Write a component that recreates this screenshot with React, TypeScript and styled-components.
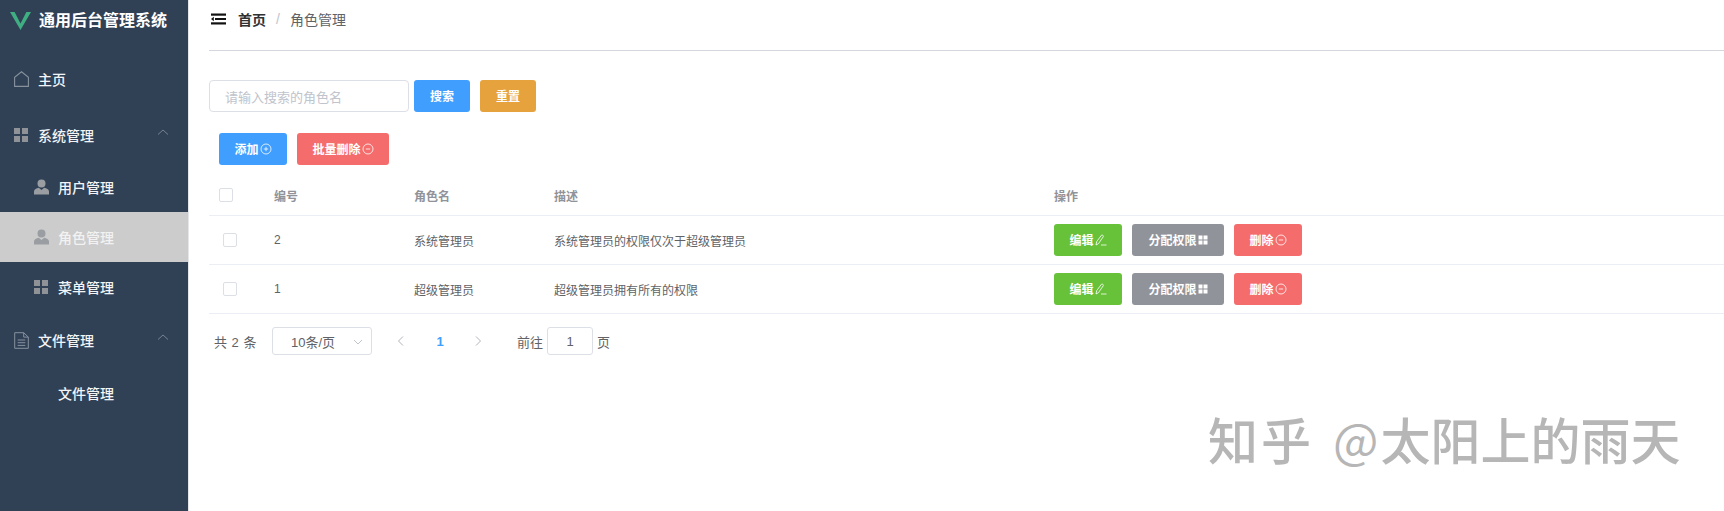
import React from "react";
import styled, { createGlobalStyle } from "styled-components";

const Global = createGlobalStyle`
  html, body { margin: 0; padding: 0; background: #fff; }
  body { font-family: "Liberation Sans", "Noto Sans CJK SC", sans-serif; }
  * { box-sizing: border-box; }
`;

const Page = styled.div`
  position: relative;
  display: flex;
  width: 1724px;
  height: 511px;
  overflow: hidden;
`;

const Side = styled.aside`
  width: 189px;
  flex: none;
  background: #304156;
  color: #fff;
  border-right: 1px solid #e4e6ea;
`;

const Logo = styled.div`
  display: flex;
  align-items: center;
  gap: 8px;
  height: 38px;
  padding-left: 10px;
  font-size: 16px;
  font-weight: 700;
  margin-bottom: 15px;
`;

const LogoMark = styled.svg`
  margin-top: 4px;
`;

const MenuRow = styled.div<{ $h: number; $sub?: boolean; $active?: boolean; $lift?: number }>`
  position: relative;
  display: flex;
  align-items: center;
  height: ${(p) => p.$h}px;
  padding-left: ${(p) => (p.$sub ? 34 : 14)}px;
  padding-bottom: ${(p) => p.$lift ?? 0}px;
  gap: 9px;
  font-size: 14px;
  font-weight: 500;
  color: ${(p) => (p.$active ? "#f2f2f2" : "#f2f4f6")};
  background: ${(p) => (p.$active ? "#cccccc" : "transparent")};
`;

const IconSlot = styled.span`
  display: inline-flex;
  width: 15px;
  height: 16px;
  flex: none;
  align-items: center;
  justify-content: flex-start;
`;

const BlankSlot = styled(IconSlot)`
  visibility: hidden;
`;

const Chevron = styled.svg`
  position: absolute;
  right: 19px;
  top: 50%;
  margin-top: -9px;
`;

const Main = styled.main`
  flex: 1;
  min-width: 0;
  padding-left: 20px;
`;

const Header = styled.header`
  display: flex;
  align-items: center;
  height: 51px;
  padding: 0 0 13px 2px;
  border-bottom: 1px solid #d4d7dd;
  font-size: 14px;
`;

const Crumb = styled.span`
  font-weight: 700;
  color: #303133;
  margin-left: 12px;
`;

const Slash = styled.span`
  color: #c0c4cc;
  margin: 0 10px;
`;

const CrumbLast = styled.span`
  color: #606266;
`;

const SearchBar = styled.div`
  display: flex;
  align-items: center;
  margin-top: 29px;
`;

const SearchInput = styled.div`
  display: flex;
  align-items: center;
  width: 200px;
  height: 32px;
  padding-left: 15px;
  border: 1px solid #dcdfe6;
  border-radius: 4px;
  font-size: 13px;
  color: #c0c4cc;
`;

const Btn = styled.button<{ $bg: string; $w: number }>`
  display: inline-flex;
  align-items: center;
  justify-content: center;
  gap: 1px;
  width: ${(p) => p.$w}px;
  height: 32px;
  padding: 0 0 1px;
  border: none;
  border-radius: 3px;
  background: ${(p) => p.$bg};
  color: #fff;
  font: inherit;
  font-size: 12px;
  font-weight: 700;
`;

const SearchBtn = styled(Btn)`
  margin-left: 5px;
  & + & { margin-left: 10px; }
`;

const ActionBar = styled.div`
  display: flex;
  gap: 10px;
  padding-left: 10px;
  margin-top: 21px;
`;

const Row = styled.div<{ $h: number; $top?: number }>`
  display: grid;
  grid-template-columns: 65px 140px 140px 500px 1fr;
  align-items: center;
  height: ${(p) => p.$h}px;
  padding-top: ${(p) => p.$top ?? 0}px;
  border-bottom: 1px solid #ebeef5;
  font-size: 12px;
  color: #606266;
`;

const HeadCell = styled.div`
  color: #909399;
  font-weight: 700;
`;

const CheckCell = styled.div<{ $pad: number }>`
  padding-left: ${(p) => p.$pad}px;
`;

const Check = styled.span`
  display: block;
  width: 14px;
  height: 14px;
  border: 1px solid #dcdfe6;
  border-radius: 2px;
  background: #fff;
`;

const Ops = styled.div`
  display: flex;
  gap: 10px;
`;

const Pager = styled.div`
  display: flex;
  align-items: center;
  height: 28px;
  margin-top: 13px;
  padding-left: 5px;
  font-size: 13px;
  color: #606266;
`;

const Total = styled.span`
  width: 58px;
  word-spacing: 1px;
`;

const SelectBox = styled.div`
  position: relative;
  display: flex;
  align-items: center;
  width: 100px;
  height: 28px;
  padding-left: 18px;
  border: 1px solid #dcdfe6;
  border-radius: 3px;
`;

const SelectArrow = styled.svg`
  position: absolute;
  right: 8px;
  top: 9px;
`;

const PageNav = styled.svg<{ $left: number }>`
  flex: none;
  margin-left: ${(p) => p.$left}px;
`;

const PageNum = styled.span`
  width: 36px;
  margin-left: 16px;
  text-align: center;
  color: #409eff;
  font-weight: 700;
`;

const GotoLabel = styled.span`
  margin-left: 34px;
`;

const Goto = styled.div`
  display: flex;
  align-items: center;
  justify-content: center;
  width: 46px;
  height: 28px;
  margin: 0 4px;
  border: 1px solid #dcdfe6;
  border-radius: 3px;
`;

const Watermark = styled.div`
  position: absolute;
  left: 1208px;
  top: 408px;
  display: flex;
  font-size: 50px;
  line-height: 60px;
  font-weight: 500;
  white-space: nowrap;
  color: #b6b6b6;
  font-family: "Noto Sans CJK SC", sans-serif;
`;

const WatermarkBrand = styled.span`
  letter-spacing: 3px;
  margin-right: 19px;
`;

const WatermarkAt = styled.span`
  font-size: 48px;
  font-weight: 400;
  margin-right: 2px;
`;

const Home = () => (
  <svg width="15" height="16" viewBox="0 0 15 16" fill="none" stroke="#87919e" strokeWidth="1.1">
    <path d="M.6 15.4V6.2L7.5.8l6.9 5.4v9.2z" />
  </svg>
);
const Grid = () => (
  <svg width="15" height="15" viewBox="0 0 15 15" fill="#8f9398">
    <rect width="6" height="6" />
    <rect x="8" width="6" height="6" />
    <rect y="8" width="6" height="6" />
    <rect x="8" y="8" width="6" height="6" />
  </svg>
);
const User = () => (
  <svg width="15" height="16" viewBox="0 0 15 16" fill="#9a9da2">
    <circle cx="7.5" cy="4.4" r="4" />
    <path d="M0 15.5v-3c0-2 2.5-3.4 4.8-3.7L7.5 11l2.7-2.2c2.3.3 4.8 1.7 4.8 3.7v3z" />
  </svg>
);
const Doc = () => (
  <svg width="15" height="17" viewBox="0 0 15 17" fill="none" stroke="#87919e" strokeWidth="1">
    <path d="M.7.7h9l4.6 4.4v11.2H.7zM9.7.7v4.4h4.6M3.7 8h7.6M3.7 10.7h7.6M3.7 13.4h7.6" />
  </svg>
);
const Up = () => (
  <Chevron width="12" height="12" viewBox="0 0 12 12" fill="none" stroke="#76818f" strokeWidth="1">
    <path d="M1 8.5L6 4l5 4.5" />
  </Chevron>
);
const CirclePlus = () => (
  <svg width="12" height="12" viewBox="0 0 12 12" fill="none" stroke="#fff" strokeWidth="0.8">
    <circle cx="6" cy="6" r="5" />
    <path d="M3.8 6h4.4M6 3.8v4.4" />
  </svg>
);
const CircleMinus = () => (
  <svg width="12" height="12" viewBox="0 0 12 12" fill="none" stroke="#fff" strokeWidth="0.8">
    <circle cx="6" cy="6" r="5" />
    <path d="M3.8 6h4.4" />
  </svg>
);
const Edit = () => (
  <svg width="12" height="12" viewBox="0 0 12 12" fill="none" stroke="#fff" strokeWidth="0.8">
    <path d="M1 11l.7-3.4L6.5 1.2c.7-.7 2.4.6 1.8 1.5L3.5 9.6 1 11zM6 11h5.5" />
  </svg>
);
const Small4 = () => (
  <svg width="10" height="10" viewBox="0 0 10 10" fill="#fff">
    <rect width="4" height="4" x="0.5" y="0.5" />
    <rect width="4" height="4" x="5.5" y="0.5" />
    <rect width="4" height="4" x="0.5" y="5.5" />
    <rect width="4" height="4" x="5.5" y="5.5" />
  </svg>
);

const rows = [
  { id: 2, name: "系统管理员", desc: "系统管理员的权限仅次于超级管理员" },
  { id: 1, name: "超级管理员", desc: "超级管理员拥有所有的权限" },
];

export default function App() {
  return (
    <Page>
      <Global />
      <Side>
        <Logo>
          <LogoMark width="21" height="18" viewBox="0 0 21 18">
            <path d="M0 0h4.6l5.9 11.5L16.4 0H21L10.5 18z" fill="#3fae82" />
          </LogoMark>
          通用后台管理系统
        </Logo>
        <MenuRow $h={52}><IconSlot><Home /></IconSlot>主页</MenuRow>
        <MenuRow $h={60}><IconSlot><Grid /></IconSlot>系统管理<Up /></MenuRow>
        <MenuRow $h={47} $lift={3} $sub><IconSlot><User /></IconSlot>用户管理</MenuRow>
        <MenuRow $h={50} $sub $active><IconSlot><User /></IconSlot>角色管理</MenuRow>
        <MenuRow $h={50} $sub><IconSlot><Grid /></IconSlot>菜单管理</MenuRow>
        <MenuRow $h={56}><IconSlot><Doc /></IconSlot>文件管理<Up /></MenuRow>
        <MenuRow $h={50} $sub><BlankSlot />文件管理</MenuRow>
      </Side>
      <Main>
        <Header>
          <svg width="15" height="12" viewBox="0 0 15 12" fill="#111">
            <rect y="0.5" width="15" height="2.2" />
            <rect x="4" y="5" width="11" height="2" />
            <path d="M0 6l2.8-2.2v4.4z" />
            <rect y="9.3" width="15" height="2.2" />
          </svg>
          <Crumb>首页</Crumb>
          <Slash>/</Slash>
          <CrumbLast>角色管理</CrumbLast>
        </Header>
        <SearchBar>
          <SearchInput>请输入搜索的角色名</SearchInput>
          <SearchBtn $bg="#409eff" $w={56}>搜索</SearchBtn>
          <SearchBtn $bg="#e6a23c" $w={56}>重置</SearchBtn>
        </SearchBar>
        <ActionBar>
          <Btn $bg="#409eff" $w={68}>添加<CirclePlus /></Btn>
          <Btn $bg="#f56c6c" $w={92}>批量删除<CircleMinus /></Btn>
        </ActionBar>
        <Row $h={51} $top={10}>
          <CheckCell $pad={10}><Check /></CheckCell>
          <HeadCell>编号</HeadCell>
          <HeadCell>角色名</HeadCell>
          <HeadCell>描述</HeadCell>
          <HeadCell>操作</HeadCell>
        </Row>
        {rows.map((r) => (
          <Row $h={49} key={r.id}>
            <CheckCell $pad={14}><Check /></CheckCell>
            <div>{r.id}</div>
            <div>{r.name}</div>
            <div>{r.desc}</div>
            <Ops>
              <Btn $bg="#67c23a" $w={68}>编辑<Edit /></Btn>
              <Btn $bg="#909399" $w={92}>分配权限<Small4 /></Btn>
              <Btn $bg="#f56c6c" $w={68}>删除<CircleMinus /></Btn>
            </Ops>
          </Row>
        ))}
        <Pager>
          <Total>共 2 条</Total>
          <SelectBox>
            10条/页
            <SelectArrow width="10" height="10" viewBox="0 0 10 10" fill="none" stroke="#c0c4cc">
              <path d="M1 3l4 4 4-4" />
            </SelectArrow>
          </SelectBox>
          <PageNav $left={24} width="10" height="12" viewBox="0 0 10 12" fill="none" stroke="#b0b4bb">
            <path d="M7 1.5L2.5 6 7 10.5" />
          </PageNav>
          <PageNum>1</PageNum>
          <PageNav $left={15} width="10" height="12" viewBox="0 0 10 12" fill="none" stroke="#b0b4bb">
            <path d="M3 1.5L7.5 6 3 10.5" />
          </PageNav>
          <GotoLabel>前往</GotoLabel>
          <Goto>1</Goto>
          页
        </Pager>
      </Main>
      <Watermark>
        <WatermarkBrand>知乎</WatermarkBrand>
        <WatermarkAt>@</WatermarkAt>
        太阳上的雨天
      </Watermark>
    </Page>
  );
}
